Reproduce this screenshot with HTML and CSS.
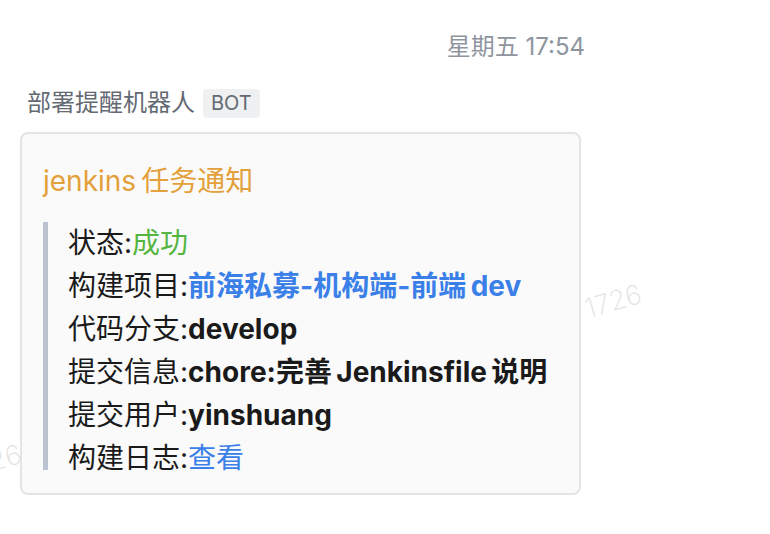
FILE: index.html
```html
<!DOCTYPE html>
<html lang="zh-CN">
<head>
<meta charset="utf-8">
<title>部署提醒机器人</title>
<link rel="stylesheet" href="styles.css">
</head>
<body>
<div class="watermark wm-right">1726</div>
<div class="watermark wm-left">1726</div>
<div class="chat">
  <div class="time">星期五 17:54</div>
  <div class="sender">
    <span class="name">部署提醒机器人</span>
    <span class="badge">BOT</span>
  </div>
  <div class="card">
    <div class="title">jenkins&#8201;任务通知</div>
    <div class="quote">
      <div class="line">状态:<span class="ok">成功</span></div>
      <div class="line">构建项目:<span class="link bold">前海私募-机构端-前端&#8201;dev</span></div>
      <div class="line">代码分支:<span class="bold">develop</span></div>
      <div class="line">提交信息:<span class="bold">chore:完善&#8201;Jenkinsfile&#8201;说明</span></div>
      <div class="line">提交用户:<span class="bold">yinshuang</span></div>
      <div class="line last">构建日志:<span class="link">查看</span></div>
    </div>
  </div>
</div>
</body>
</html>
```
FILE: styles.css
```css
html, body {
  margin: 0;
  padding: 0;
  background: #ffffff;
}
body {
  font-family: Inter, "Noto Sans CJK SC", sans-serif;
  color: #1a1a1a;
  position: relative;
  width: 770px;
  height: 534px;
  overflow: hidden;
}
.watermark {
  position: absolute;
  font-family: Inter, sans-serif;
  font-size: 27px;
  color: #e2e2e2;
  font-weight: 200;
  transform: rotate(-16deg);
  transform-origin: left bottom;
  z-index: 0;
}
.wm-right {
  left: 590px;
  top: 292px;
}
.wm-left {
  left: -30px;
  top: 452px;
}
.chat {
  position: relative;
  z-index: 1;
  padding-top: 31px;
  width: 585px;
}
.time {
  text-align: right;
  font-size: 24px;
  line-height: 32px;
  color: #8f959e;
}
.sender {
  margin-top: 24px;
  padding-left: 27px;
  display: flex;
  align-items: center;
  gap: 8px;
  height: 32px;
}
.name {
  font-size: 24px;
  line-height: 32px;
  color: #646a73;
}
.badge {
  font-size: 20px;
  line-height: 29px;
  height: 29px;
  padding: 0 8px;
  background: #eff0f1;
  color: #646a73;
  border-radius: 4px;
}
.card {
  margin-top: 13px;
  margin-left: 20px;
  width: 561px;
  box-sizing: border-box;
  border: 2px solid #e3e4e6;
  border-radius: 8px;
  background: #fafafa;
  padding: 27px 21px 23px;
}
.title {
  font-size: 28px;
  line-height: 40px;
  color: #e4a03a;
  margin-bottom: 21px;
}
.quote {
  border-left: 5px solid #bcc3d0;
  padding-left: 20px;
  font-size: 28px;
  line-height: 43px;
}
.line {
  height: 43px;
  white-space: nowrap;
}
.line.last {
  height: 33px;
}
.bold {
  font-weight: bold;
}
.ok {
  color: #55b540;
}
.link {
  color: #3b7fe8;
}
```
